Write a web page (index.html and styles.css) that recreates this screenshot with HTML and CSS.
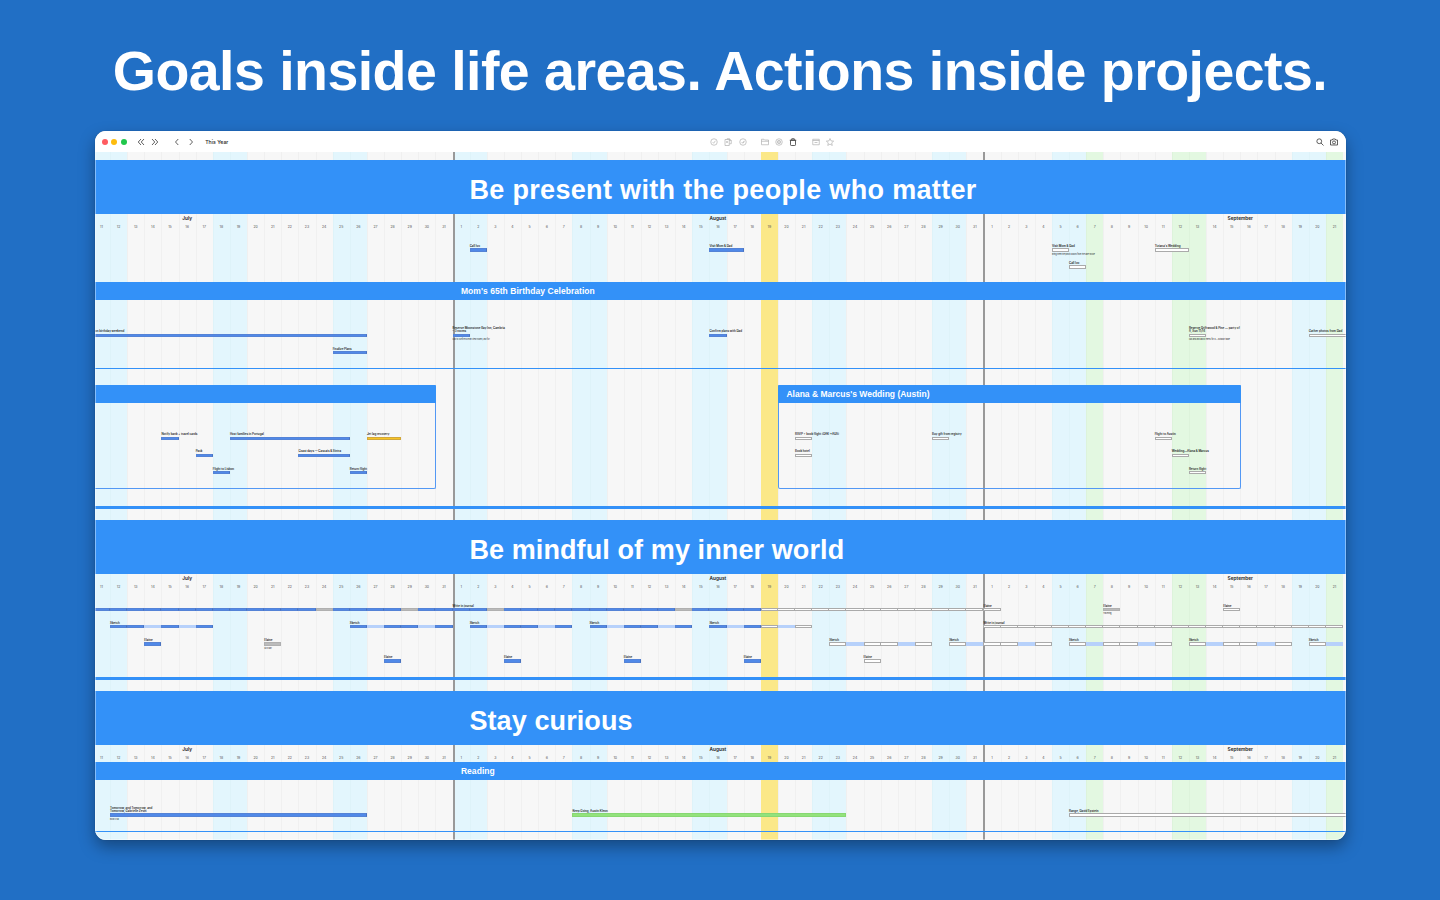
FILE: index.html
```html
<!DOCTYPE html>
<html lang="en">
<head>
    <meta charset="UTF-8">
    <meta name="viewport" content="width=device-width, initial-scale=1.0">
    <title>Goals inside life areas</title>
    <link rel="stylesheet" href="styles.css">
</head>
<body>
    <h1 class="headline">Goals inside life areas. Actions inside projects.</h1>

    <div class="window">
        <div class="toolbar">
            <div class="tools-left">
                <span class="dot red"></span>
                <span class="dot yellow"></span>
                <span class="dot green"></span>
                <svg class="icon dark first" viewBox="0 0 16 16"><path d="M8 2L2.500 8L8 14M14 2L8.500 8L14 14"/></svg>
                <svg class="icon dark second" viewBox="0 0 16 16"><path d="M2 2L7.500 8L2 14M8 2L13.500 8L8 14"/></svg>
                <svg class="icon dark third" viewBox="0 0 16 16"><path d="M10.500 2L5 8L10.500 14"/></svg>
                <svg class="icon dark fourth" viewBox="0 0 16 16"><path d="M5.500 2L11 8L5.500 14"/></svg>
                <span class="range">This Year</span>
            </div>
            <div class="tools-center">
                <svg class="icon" viewBox="0 0 16 16"><circle cx="8" cy="8" r="6.500"/><path d="M5.500 8.500L7.300 10.500L10.800 5.500"/></svg>
                <svg class="icon" viewBox="0 0 16 16"><path d="M6 3V1.500H11L14.500 5V11.500H11M6 3H2V15H10.500V3H6M6 6V10M4 8H8M11 1.500V5H14.500"/></svg>
                <svg class="icon" viewBox="0 0 16 16"><circle cx="8" cy="8" r="6.500"/><path d="M5.500 8.500L7 10.300L10.500 5.500M8 10.500L11 7"/></svg>
                <svg class="icon gap" viewBox="0 0 16 16"><path d="M1 13.500V2.500H6L7.500 4H15V13.500ZM1 6.500H15"/></svg>
                <svg class="icon" viewBox="0 0 16 16"><circle cx="8" cy="8" r="6.500"/><circle cx="8" cy="8" r="3.300"/><circle cx="8" cy="8" r="1"/></svg>
                <svg class="icon dark" viewBox="0 0 16 16"><path d="M3 4.500H13V13.500Q13 15 11.500 15H4.500Q3 15 3 13.500ZM1.500 4.500H14.500M5.500 4V1.500H10.500V4"/></svg>
                <svg class="icon gap" viewBox="0 0 16 16"><path d="M1.500 2.500H14.500V13.500H1.500ZM1.500 5H14.500M5 9H11"/></svg>
                <svg class="icon" viewBox="0 0 16 16"><path d="M8 1L10.100 5.800L15.300 6.300L11.400 9.800L12.500 14.900L8 12.200L3.500 14.900L4.600 9.800L0.700 6.300L5.900 5.800Z"/></svg>
            </div>
            <div class="tools-right">
                <svg class="icon dark" viewBox="0 0 16 16"><circle cx="6.500" cy="6.500" r="4.800"/><path d="M10 10L15 15"/></svg>
                <svg class="icon dark" viewBox="0 0 16 16"><path d="M1 4H4.500L5.500 2H10.500L11.500 4H15V14H1Z"/><circle cx="8" cy="8.800" r="3"/></svg>
            </div>
        </div>

        <div class="timeline">
            <div class="days" id="days"></div>

            <div class="content">
                <section class="area">
                    <h2 class="area-title spaced">Be present with the people who matter</h2>
                    <div class="dates"></div>
                    <div class="events loose" data-events="people"></div>
                    <h3 class="project-title">Mom's 65th Birthday Celebration</h3>
                    <div class="events project-body mom" data-events="mom"></div>
                    <div class="cards">
                        <div class="card portugal">
                            <h3 class="card-title">&nbsp;</h3>
                            <div class="events card-body" data-events="portugal" data-start="7/11"></div>
                        </div>
                        <div class="card austin">
                            <h3 class="card-title">Alana &amp; Marcus's Wedding (Austin)</h3>
                            <div class="events card-body" data-events="austin" data-start="8/20"></div>
                        </div>
                    </div>
                    <div class="area-end"></div>
                </section>

                <section class="area">
                    <h2 class="area-title">Be mindful of my inner world</h2>
                    <div class="dates"></div>
                    <div class="events mindful" data-events="mindful"></div>
                    <div class="area-end"></div>
                </section>

                <section class="area">
                    <h2 class="area-title">Stay curious</h2>
                    <div class="dates"></div>
                    <h3 class="project-title">Reading</h3>
                    <div class="events project-body reading" data-events="reading"></div>
                </section>
            </div>
        </div>
    </div>

    <script src="script.js"></script>
</body>
</html>
```

FILE: styles.css
```css
* {
    margin: 0;
    padding: 0;
    box-sizing: border-box;
}

:root {
    --day: 17.13px;
    --blue: #3391f8;
}

body {
    height: 900px;
    overflow: hidden;
    background-color: #216fc5;
    font-family: Inter, "Liberation Sans", sans-serif;
    color: #222;
}

.headline {
    height: 131px;
    padding-top: 38px;
    font-family: "Liberation Sans", Arial, sans-serif;
    font-size: 55.5px;
    line-height: 66px;
    letter-spacing: -0.540px;
    text-align: center;
    white-space: nowrap;
    color: white;
}

.window {
    position: relative;
    width: 1251px;
    height: 708.5px;
    margin: 0 auto;
    border-radius: 11px;
    overflow: hidden;
    background: #f7f7f7;
    box-shadow: 0 0 1px rgba(0, 0, 0, 0.4), 0 7px 16px rgba(0, 0, 0, 0.35);
}

/* thin light edge over the whole window */
.window::after {
    content: "";
    position: absolute;
    inset: 0;
    border: 1px solid rgba(255, 255, 255, 0.4);
    border-radius: 11px;
    pointer-events: none;
}

/* toolbar */
.toolbar {
    height: 21px;
    display: grid;
    grid-template-columns: 1fr auto 1fr;
    align-items: center;
    background: white;
}

.tools-left, .tools-center, .tools-right {
    display: flex;
    align-items: center;
}

.tools-left {
    padding-left: 7.500px;
}

.dot {
    width: 6px;
    height: 6px;
    margin-right: 3.400px;
    border-radius: 50%;
}

.red { background: #ff5b60; }
.yellow { background: #fdbc0e; }
.green { background: #20c74b; }

.icon {
    width: 8px;
    height: 8px;
    fill: none;
    stroke: #aaa;
    stroke-width: 1.300;
}

.icon.dark {
    stroke: #444;
    stroke-width: 1.700;
}

.first { margin-left: 6.500px; }
.second { margin-left: 6px; }
.third { margin-left: 14px; }
.fourth { margin-left: 6.500px; }

.range {
    margin-left: 10px;
    font-size: 5.200px;
    font-weight: 500;
}

.tools-center {
    gap: 6.300px;
    padding-left: 104px;
}

.tools-center .gap {
    margin-left: 7.800px;
}

.tools-right {
    justify-content: flex-end;
    gap: 6px;
    padding-right: 7.500px;
}

/* timeline: day columns underneath, sections stacked on top */
.timeline {
    display: grid;
    height: 687.5px;
    overflow: hidden;
    margin-left: -1.600px;
}

.days, .content {
    grid-area: 1 / 1;
    min-width: 0;
}

.days, .dates, .events, .cards {
    display: grid;
    grid-template-columns: repeat(74, var(--day));
}

.day {
    border-left: 1px solid #f0f0f0;
}

.day.weekend { background: #e3f6fd; border-color: #def3f9; }
.day.holiday { background: #e3f8e1; border-color: #ddf3db; }
.day.today { background: #fbe888; border-color: #fbe888; }

.day.month-start {
    border-left: 2px solid #999;
}

.content {
    padding-top: 8px;
}

.area-title {
    height: 54px;
    padding: 4px 0 0 376.5px;
    background: var(--blue);
    color: white;
    font: bold 27px/52px "Liberation Sans", Arial, sans-serif;
    letter-spacing: 0.100px;
}

.area-title.spaced {
    letter-spacing: 0.330px;
}

.dates {
    height: 17.13px;
    grid-template-rows: 8.600px 8.530px;
    text-align: center;
}

.month {
    grid-row: 1;
    font-size: 4.800px;
    line-height: 9.500px;
    font-weight: 600;
    white-space: nowrap;
}

.date {
    grid-row: 2;
    font-size: 3.500px;
    line-height: 8px;
    color: #555;
}

.project-title, .card-title {
    height: 17.5px;
    background: var(--blue);
    color: white;
    font: bold 8.500px/18.5px "Liberation Sans", Arial, sans-serif;
}

.project-title {
    padding-left: 368px;
    line-height: 19px;
    letter-spacing: 0.050px;
}

/* events */
.events {
    grid-auto-rows: var(--day);
}

.loose { height: 51.27px; padding-top: 3.500px; }
.project-body { border-bottom: 1px solid var(--blue); }
.mom { height: 69.1px; padding-top: 20.2px; }
.mindful { height: 85.87px; padding-top: 3.100px; }
.reading { height: 52.4px; padding-top: 20.100px; }

.event {
    min-width: 0;
    display: flex;
    flex-direction: column;
    justify-content: flex-end;
    font-size: 2.900px;
    line-height: 3.300px;
    font-weight: 600;
    white-space: nowrap;
}

/* the first column starts just outside the window */
.event.from-edge .event-label {
    padding-left: 2px;
}

.bar {
    flex: none;
    height: 3.500px;
    display: grid;
    grid-auto-flow: column;
    grid-auto-columns: minmax(0, 1fr);
}

.seg {
    border: 1px solid transparent;
}

.seg.done { background: #5089e8; border-color: #5583d6; border-right-color: #4a72bd; }
.seg.open { background: white; border-color: #aaa; }
.seg.open + .seg.open { border-left-width: 0; }
.seg.light { background: #b7d1fb; }
.seg.skip { background: #bbb; border-color: #b0b0b0; }
.seg.amber { background: #f7c325; border-color: #d1a73a; }
.seg.lime { background: #93e27c; border-color: #87d872; }

.note {
    height: 0;
    font-size: 1.900px;
    line-height: 4px;
    font-weight: 400;
}

/* project cards */
.cards {
    padding-top: 16.5px;
    height: 136.8px;
}

.card {
    height: 104px;
    margin-right: -1px;
    border: 1px solid #5398f4;
    border-top: none;
    border-radius: 2px;
}

.portugal { grid-column: 1 / 21; }
.austin { grid-column: 41 / 68; }

.card-title {
    margin: 0 -1px;
    padding-left: 8.500px;
    border-radius: 1px 1px 0 0;
}

.card-body {
    margin-left: -1px;
    padding-top: 20px;
}

.area-end {
    height: 14.2px;
    border-top: 3px solid var(--blue);
}
```

FILE: script.js
```js
const FIRST = { 7: -10, 8: 21, 9: 52 };
const COLUMNS = 74;

// "8/19" -> column in the timeline, 7/11 is column 1
function column(date) {
    const [month, day] = date.split('/').map(Number);
    return FIRST[month] + day;
}

const SEGMENTS = { d: 'done', o: 'open', l: 'light', s: 'skip', a: 'amber', g: 'lime' };

// [row, start, days, label, segments, note]
// a single letter is one solid bar, otherwise one letter per day
const events = {
    people: [
        [1, '8/2', 1, 'Call Ivo', 'd'],
        [1, '8/16', 2, 'Visit Mom & Dad', 'd'],
        [1, '9/5', 1, 'Visit Mom & Dad', 'o', 'Bring them the photo books from the lake house'],
        [2, '9/6', 1, 'Call Ivo', 'o'],
        [1, '9/11', 2, "Tiziana's Wedding", 'o']
    ],
    mom: [
        [1, '7/11', 16, 'on birthday weekend', 'd'],
        [2, '7/25', 2, 'Finalize Plans', 'd'],
        [1, '8/1', 1, 'Reserve Moonstone Bay Inn, Cambria<br>– 3 rooms', 'd', 'Call to confirm ocean view rooms, ask for'],
        [1, '8/16', 1, 'Confirm plans with Dad', 'd'],
        [1, '9/13', 1, 'Reserve Driftwood &amp; Pine — party of<br>8, Sun 11/14', 'o', 'Call and ask about menu for 8 + outdoor table'],
        [1, '9/20', 3, 'Gather photos from Dad', 'o']
    ],
    portugal: [
        [1, '7/15', 1, 'Notify bank + travel cards', 'd'],
        [2, '7/17', 1, 'Pack', 'd'],
        [3, '7/18', 1, 'Flight to Lisbon', 'd'],
        [1, '7/19', 7, 'Host families in Portugal', 'd'],
        [2, '7/23', 3, 'Coast days — Cascais & Sintra', 'd'],
        [3, '7/26', 1, 'Return flight', 'd'],
        [1, '7/27', 2, 'Jet lag recovery', 'a']
    ],
    austin: [
        [1, '8/21', 1, 'RSVP + book flight (OAK→AUS)', 'o'],
        [2, '8/21', 1, 'Book hotel', 'o'],
        [1, '8/29', 1, 'Buy gift from registry', 'o'],
        [1, '9/11', 1, 'Flight to Austin', 'o'],
        [2, '9/12', 1, 'Wedding—Alana & Marcus', 'o'],
        [3, '9/13', 1, 'Return flight', 'o']
    ],
    mindful: [
        [1, '7/11', 21, '', 'dddddddddddddsddddsdd'],
        [1, '8/1', 31, 'Write in journal', 'ddsddddddddddsddddooooooooooooo'],
        [1, '9/1', 1, 'Elaine', 'o'],
        [1, '9/8', 1, 'Elaine', 's', 'Traveling'],
        [1, '9/15', 1, 'Elaine', 'o'],
        [2, '7/12', 6, 'Sketch', 'ddldld'],
        [2, '7/26', 6, 'Sketch', 'dlddld'],
        [2, '8/2', 6, 'Sketch', 'dlddld'],
        [2, '8/9', 6, 'Sketch', 'dlddld'],
        [2, '8/16', 6, 'Sketch', 'dldolo'],
        [2, '9/1', 21, 'Write in journal', 'ooooooooooooooooooooo'],
        [3, '7/14', 1, 'Elaine', 'd'],
        [3, '7/21', 1, 'Elaine', 's', 'Sick day'],
        [3, '8/23', 6, 'Sketch', 'oloolo'],
        [3, '8/30', 6, 'Sketch', 'oloolo'],
        [3, '9/6', 6, 'Sketch', 'oloolo'],
        [3, '9/13', 6, 'Sketch', 'oloolo'],
        [3, '9/20', 2, 'Sketch', 'ol'],
        [4, '7/28', 1, 'Elaine', 'd'],
        [4, '8/4', 1, 'Elaine', 'd'],
        [4, '8/11', 1, 'Elaine', 'd'],
        [4, '8/18', 1, 'Elaine', 'd'],
        [4, '8/25', 1, 'Elaine', 'o']
    ],
    reading: [
        [1, '7/12', 15, 'Tomorrow, and Tomorrow, and<br>Tomorrow, Gabrielle Zevin', 'd', 'Book club'],
        [1, '8/8', 16, 'Keep Going, Austin Kleon', 'g'],
        [1, '9/6', 17, 'Range, David Epstein', 'o']
    ]
};

// list every visible date
const dates = [];
for (const [month, from, to] of [[7, 11, 31], [8, 1, 31], [9, 1, 21]]) {
    for (let d = from; d <= to; d++) {
        dates.push({ month, d });
    }
}

// day columns, 7/11 is a Saturday
const holidays = ['9/7', '9/12', '9/13', '9/21'];
document.getElementById('days').innerHTML = dates.map(({ month, d }, i) => {
    const key = `${month}/${d}`;
    let cls = 'day';
    if (holidays.includes(key)) cls += ' holiday';
    else if (i % 7 < 2) cls += ' weekend';
    if (key === '8/19') cls += ' today';
    if (d === 1) cls += ' month-start';
    return `<div class="${cls}"></div>`;
}).join('');

// month names and date numbers
const months = [['July', '7/16', 1], ['August', '8/16', 1], ['September', '9/15', 2]];
document.querySelectorAll('.dates').forEach(row => {
    row.innerHTML = months.map(([name, at, span]) =>
        `<span class="month" style="grid-column: ${column(at)} / span ${span}">${name}</span>`
    ).join('') + dates.map(({ d }, i) =>
        `<span class="date" style="grid-column: ${i + 1}">${d}</span>`
    ).join('');
});

document.querySelectorAll('.events').forEach(box => {
    const offset = box.dataset.start ? column(box.dataset.start) - 1 : 0;
    box.innerHTML = events[box.dataset.events].map(([row, start, days, label, segs, note]) => {
        const from = column(start) - offset;
        const span = Math.min(days, COLUMNS + 1 - from);
        const bar = [...segs].map(s => `<span class="seg ${SEGMENTS[s]}"></span>`).join('');
        return `<div class="event${from === 1 ? ' from-edge' : ''}" style="grid-area: ${row} / ${from} / auto / span ${span}">
            <span class="event-label">${label}</span>
            <div class="bar">${bar}</div>
            ${note ? `<span class="note">${note}</span>` : ''}
        </div>`;
    }).join('');
});
```
